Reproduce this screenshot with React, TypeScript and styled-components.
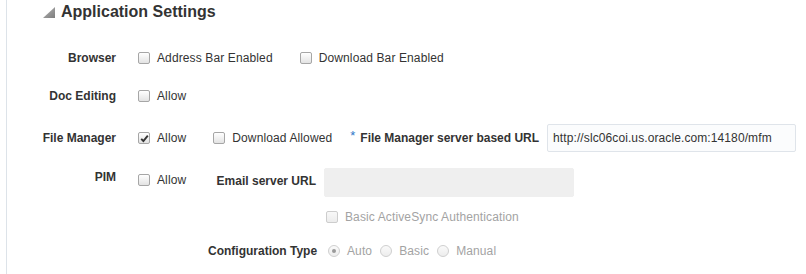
import React from 'react';
import styled, { createGlobalStyle, css } from 'styled-components';

const GlobalStyle = createGlobalStyle`
  html, body {
    margin: 0;
    padding: 0;
    background: #fff;
  }
  body {
    font-family: 'Liberation Sans', Arial, sans-serif;
    font-size: 12px;
    color: #333;
  }
`;

const Page = styled.div`
  width: 806px;
  height: 274px;
  overflow: hidden;
  padding-left: 6px;
  box-sizing: border-box;
`;

const Panel = styled.section`
  height: 100%;
  border-left: 1px solid #dde3e9;
`;

const Header = styled.div`
  display: flex;
  align-items: center;
  gap: 6px;
  height: 24px;
  padding-left: 36px;
`;

const Title = styled.h2`
  margin: 0;
  font-size: 16px;
  font-weight: bold;
  line-height: 24px;
  color: #333;
`;

const FieldRow = styled.div<{ $top: number; $height?: number; $start?: boolean }>`
  display: grid;
  grid-template-columns: 109px 1fr;
  column-gap: 22px;
  align-items: ${({ $start }) => ($start ? 'start' : 'center')};
  margin-top: ${({ $top }) => $top}px;
  height: ${({ $height }) => ($height ? `${$height}px` : 'auto')};
`;

const Label = styled.div<{ $lh?: number }>`
  text-align: right;
  font-weight: bold;
  color: #333;
  white-space: nowrap;
  ${({ $lh }) =>
    $lh &&
    css`
      line-height: ${$lh}px;
    `}
`;

const Content = styled.div`
  display: flex;
  align-items: center;
`;

const CheckGroup = styled.div`
  display: flex;
  align-items: center;
  gap: 27px;
`;

const OptionLabel = styled.label<{ $disabled?: boolean }>`
  display: inline-flex;
  align-items: center;
  gap: 7px;
  white-space: nowrap;
  letter-spacing: 0.12px;
  color: ${({ $disabled }) => ($disabled ? '#a3a3a3' : '#333')};
`;

const Box = styled.span<{ $disabled?: boolean }>`
  display: inline-flex;
  align-items: center;
  justify-content: center;
  width: 12px;
  height: 12px;
  box-sizing: border-box;
  border-radius: 2px;
  border: 1px solid ${({ $disabled }) => ($disabled ? '#cdcdcd' : '#a6a6a6')};
  background: ${({ $disabled }) =>
    $disabled
      ? 'linear-gradient(#f8f8f8, #ececec)'
      : 'linear-gradient(#ffffff, #e3e3e3)'};
`;

const Circle = styled.span<{ $checked?: boolean }>`
  position: relative;
  display: inline-block;
  width: 12px;
  height: 12px;
  box-sizing: border-box;
  border-radius: 50%;
  border: 1px solid #cfcfcf;
  background: linear-gradient(#fafafa, #ededed);

  ${({ $checked }) =>
    $checked &&
    css`
      &::after {
        content: '';
        position: absolute;
        left: 3px;
        top: 3px;
        width: 4px;
        height: 4px;
        border-radius: 50%;
        background: #9a9a9a;
      }
    `}
`;

const UrlField = styled.div`
  display: flex;
  align-items: center;
  margin-left: 18px;
`;

const Star = styled.span`
  align-self: flex-start;
  margin-top: 5px;
  margin-right: 5px;
  font-size: 13px;
  line-height: 13px;
  color: #2f78c8;
`;

const UrlLabel = styled.span`
  font-weight: bold;
  margin-right: 8px;
  white-space: nowrap;
`;

const TextInput = styled.input<{ $width: number; $disabled?: boolean; $height?: number }>`
  width: ${({ $width }) => $width}px;
  height: ${({ $height }) => $height || 28}px;
  box-sizing: border-box;
  padding: 0 5px;
  border-radius: 2px;
  font-family: 'Liberation Sans', Arial, sans-serif;
  font-size: 12px;
  letter-spacing: 0.1px;
  color: #333;
  outline: none;
  border: 1px solid ${({ $disabled }) => ($disabled ? '#efefef' : '#dfe4ea')};
  background: ${({ $disabled }) => ($disabled ? '#efefef' : '#fbfcfd')};
`;

const SubGrid = styled.div`
  display: grid;
  grid-template-columns: 70px 116px 1fr;
  grid-template-rows: 30px 28px 28px;
  row-gap: 6px;
  align-items: center;
`;

const TopCell = styled.div`
  align-self: start;
  padding-top: 6px;
`;

const SubLabel = styled.div<{ $top?: boolean }>`
  text-align: right;
  padding-right: 8px;
  font-weight: bold;
  white-space: nowrap;
  ${({ $top }) =>
    $top &&
    css`
      align-self: start;
      padding-top: 7px;
    `}
`;

const InputCell = styled.div`
  align-self: start;
  padding-top: 1px;
`;

const Indented = styled.div<{ $pad: number }>`
  display: flex;
  align-items: center;
  gap: 8px;
  padding-left: ${({ $pad }) => $pad}px;
`;

const Triangle = () => (
  <svg width="12" height="11" viewBox="0 0 12 11">
    <defs>
      <linearGradient id="tri" x1="0" y1="0" x2="1" y2="1">
        <stop offset="0" stopColor="#b5b5b5" />
        <stop offset="1" stopColor="#7d7d7d" />
      </linearGradient>
    </defs>
    <polygon points="12,0 12,11 0,11" fill="url(#tri)" />
  </svg>
);

interface CheckProps {
  text: string;
  checked?: boolean;
  disabled?: boolean;
}

const Check: React.FC<CheckProps> = ({ text, checked, disabled }) => (
  <OptionLabel $disabled={disabled}>
    <Box $disabled={disabled}>
      {checked && (
        <svg width="9" height="9" viewBox="0 0 9 9">
          <path d="M1.2 4.8 L3.4 7 L7.8 1.6" fill="none" stroke="#333" strokeWidth="1.9" />
        </svg>
      )}
    </Box>
    {text}
  </OptionLabel>
);

const Radio: React.FC<{ text: string; checked?: boolean }> = ({ text, checked }) => (
  <OptionLabel $disabled>
    <Circle $checked={checked} />
    {text}
  </OptionLabel>
);

export default function App() {
  return (
    <Page>
      <GlobalStyle />
      <Panel>
        <Header>
          <Triangle />
          <Title>Application Settings</Title>
        </Header>

        <FieldRow $top={20} $height={28}>
          <Label>Browser</Label>
          <Content>
            <CheckGroup>
              <Check text="Address Bar Enabled" />
              <Check text="Download Bar Enabled" />
            </CheckGroup>
          </Content>
        </FieldRow>

        <FieldRow $top={10} $height={28}>
          <Label>Doc Editing</Label>
          <Content>
            <Check text="Allow" />
          </Content>
        </FieldRow>

        <FieldRow $top={14} $height={28}>
          <Label>File Manager</Label>
          <Content>
            <CheckGroup>
              <Check text="Allow" checked />
              <Check text="Download Allowed" />
            </CheckGroup>
            <UrlField>
              <Star>*</Star>
              <UrlLabel>File Manager server based URL</UrlLabel>
              <TextInput $width={249} readOnly value="http://slc06coi.us.oracle.com:14180/mfm" />
            </UrlField>
          </Content>
        </FieldRow>

        <FieldRow $top={15} $start>
          <Label $lh={21}>PIM</Label>
          <SubGrid>
            <TopCell>
              <Check text="Allow" />
            </TopCell>
            <SubLabel $top>Email server URL</SubLabel>
            <InputCell>
              <TextInput $width={250} $height={29} $disabled readOnly value="" />
            </InputCell>

            <div />
            <div />
            <Indented $pad={2}>
              <Check text="Basic ActiveSync Authentication" disabled />
            </Indented>

            <div />
            <SubLabel>Configuration Type</SubLabel>
            <Indented $pad={4}>
              <Radio text="Auto" checked />
              <Radio text="Basic" />
              <Radio text="Manual" />
            </Indented>
          </SubGrid>
        </FieldRow>
      </Panel>
    </Page>
  );
}
